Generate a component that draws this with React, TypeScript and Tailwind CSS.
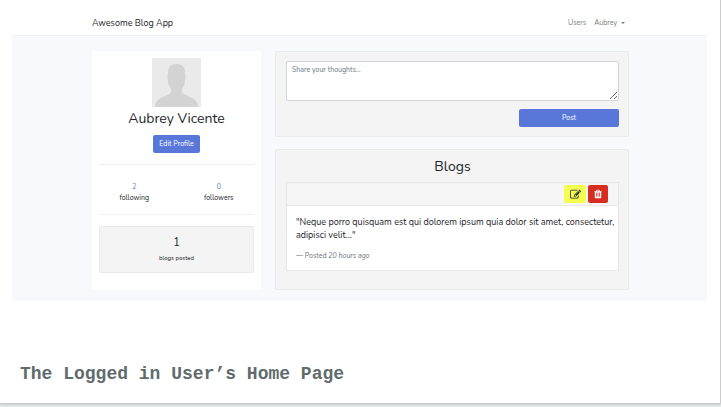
import type { ReactNode } from "react";

function Panel({ children, className }: { children: ReactNode; className: string }) {
  return (
    <section className={`rounded-[2px] border border-[#e9eaec] bg-[#f4f4f4] ${className}`}>
      {children}
    </section>
  );
}

function EditIcon() {
  return (
    <svg viewBox="0 0 1792 1792" className="size-[11px]" fill="currentColor" aria-hidden="true">
      <path d="M888 1184l116-116-152-152-116 116v56h96v96h56zm440-720q-16-16-33 1l-350 350q-17 17-1 33t33-1l350-350q17-17 1-33zm80 594v190q0 119-84.500 203.500t-203.500 84.500h-832q-119 0-203.500-84.500t-84.500-203.500v-832q0-119 84.500-203.500t203.500-84.500h832q63 0 117 25 15 7 18 23 3 17-9 29l-49 49q-14 14-32 8-23-6-45-6h-832q-66 0-113 47t-47 113v832q0 66 47 113t113 47h832q66 0 113-47t47-113v-126q0-13 9-22l64-64q15-15 35-7t20 29zm-96-738l288 288-672 672h-288v-288zm444 132l-92 92-288-288 92-92q28-28 68-28t68 28l152 152q28 28 28 68t-28 68z" />
    </svg>
  );
}

function TrashIcon() {
  return (
    <svg viewBox="0 0 1792 1792" className="size-[10px]" fill="currentColor" aria-hidden="true">
      <path d="M704 1376v-704q0-14-9-23t-23-9h-64q-14 0-23 9t-9 23v704q0 14 9 23t23 9h64q14 0 23-9t9-23zm256 0v-704q0-14-9-23t-23-9h-64q-14 0-23 9t-9 23v704q0 14 9 23t23 9h64q14 0 23-9t9-23zm256 0v-704q0-14-9-23t-23-9h-64q-14 0-23 9t-9 23v704q0 14 9 23t23 9h64q14 0 23-9t9-23zm-544-992h448l-48-117q-7-9-17-11h-317q-10 2-17 11zm928 32v64q0 14-9 23t-23 9h-96v948q0 83-47 143.500t-113 60.500h-832q-66 0-113-58.500t-47-141.500v-952h-96q-14 0-23-9t-9-23v-64q0-14 9-23t23-9h309l70-167q15-37 54-63t79-26h320q40 0 79 26t54 63l70 167h309q14 0 23 9t9 23z" />
    </svg>
  );
}

function Navbar() {
  return (
    <nav className="flex h-9 items-center justify-between border-b border-[#eff0f3] bg-white pt-[10px] pr-[78px] pl-20">
      <a href="#home" className="text-[9px] leading-4 text-[#212529]">
        Awesome Blog App
      </a>
      <div className="flex items-center gap-2 text-[7px] leading-4 text-[#7c7c7c]">
        <a href="#users">Users</a>
        <button type="button" className="flex items-center gap-1 pr-1">
          Aubrey
          <span className="border-x-2 border-t-2 border-x-transparent border-t-[#7c7c7c]" />
        </button>
      </div>
    </nav>
  );
}

function Avatar() {
  return (
    <svg viewBox="0 0 49 49" className="size-[49px]" role="img" aria-label="Aubrey Vicente">
      <rect width="49" height="49" fill="#eaeaea" />
      <path
        d="M3 49c0-5 3-8 8-10l6-3c2-1 2.500-2 2-5-2-3-3-5-3-9-.8-2-.8-4 0-6C15.500 10 18 6 24.500 6S33.500 10 33 16c.8 2 .8 4 0 6 0 4-1 6-3 9-.5 3 0 4 2 5l6 3c5 2 8 5 8 10z"
        fill="#d3d3d3"
      />
    </svg>
  );
}

function Stat({ value, label }: { value: number; label: string }) {
  return (
    <div className="flex flex-1 flex-col items-center text-[7px] leading-[11px] text-[#212529]">
      <a href={`#${label}`} className="text-[#5b79dc]">
        {value}
      </a>
      <span>{label}</span>
    </div>
  );
}

function Profile() {
  return (
    <aside className="flex flex-col items-center rounded-[2px] bg-white pt-[7px] text-[#212529]">
      <Avatar />
      <h1 className="mt-[2px] text-[14px] leading-5">Aubrey Vicente</h1>
      <button
        type="button"
        className="mt-[6px] h-[18px] rounded-[2px] bg-[#5977d9] px-[6px] text-[7px] leading-4 text-white"
      >
        Edit Profile
      </button>
      <div className="mt-[11px] w-full px-[7px]">
        <hr className="border-[#efefef]" />
      </div>
      <div className="flex w-full pt-4 pb-[11px]">
        <Stat value={2} label="following" />
        <Stat value={0} label="followers" />
      </div>
      <div className="w-full px-[7px]">
        <hr className="border-[#efefef]" />
        <Panel className="mt-[11px] flex h-[47px] flex-col items-center pt-2">
          <span className="text-[11px] leading-4">1</span>
          <span className="mt-[1px] text-[6px] leading-3">blogs posted</span>
        </Panel>
      </div>
    </aside>
  );
}

function Composer() {
  return (
    <Panel className="h-[86px] pt-[9px] pr-[9px] pl-[10px]">
      <form className="flex flex-col items-end">
        <textarea
          aria-label="Share your thoughts"
          placeholder="Share your thoughts..."
          className="block h-10 w-full rounded-[2px] border border-[#d3d7dc] bg-white px-[5px] py-[3px] text-[7px] leading-[10px] placeholder:text-[#6c757d]"
        />
        <button
          type="button"
          className="mt-2 h-[18px] w-[30%] rounded-[2px] bg-[#5977d9] text-[7px] leading-4 text-white"
        >
          Post
        </button>
      </form>
    </Panel>
  );
}

function Blogs() {
  return (
    <Panel className="pt-[7px] pr-[9px] pb-[18px] pl-[10px]">
      <h2 className="text-center text-[14px] leading-5 text-[#212529]">Blogs</h2>
      <article className="mt-[5px] border border-[#e6e7e8] bg-white">
        <header className="flex h-[23px] items-center justify-end gap-[2px] border-b border-[#e9e9e9] bg-[#f6f6f6] pr-[10px]">
          <button
            type="button"
            aria-label="Edit post"
            className="flex h-[18px] w-[22px] items-center justify-center rounded-[2px] bg-[#f4ff52] text-[#212529]"
          >
            <EditIcon />
          </button>
          <button
            type="button"
            aria-label="Delete post"
            className="flex h-[18px] w-5 items-center justify-center rounded-[2px] bg-[#d62d20] text-white"
          >
            <TrashIcon />
          </button>
        </header>
        <blockquote className="pt-[10px] pb-2 pl-[9px]">
          <p className="text-[9px] leading-[13px] text-[#212529]">
            "Neque porro quisquam est qui dolorem ipsum quia dolor sit amet, consectetur, adipisci
            velit..."
          </p>
          <footer className="mt-2 text-[7px] leading-3 text-[#6c757d]">
            — Posted <cite>20 hours ago</cite>
          </footer>
        </blockquote>
      </article>
    </Panel>
  );
}

export default function App() {
  return (
    <div className="min-h-screen bg-[#e8eaed]">
      <main className="border-r border-b border-[#cccccc] bg-white pb-[17px] shadow-sm">
        <div className="mr-[13px] ml-3 bg-[#f7f9fd] pb-[11px] font-[Nunito,Lato,'Open_Sans',sans-serif]">
          <Navbar />
          <div className="grid grid-cols-[169fr_354fr] gap-[14px] pt-[15px] pr-[78px] pl-20">
            <Profile />
            <div className="flex flex-col gap-3">
              <Composer />
              <Blogs />
            </div>
          </div>
        </div>
        <h3 className="mt-[61px] px-5 font-['Liberation_Mono',monospace] text-[18px] leading-6 font-bold text-[#5f6b6d]">
          The Logged in User’s Home Page
        </h3>
      </main>
    </div>
  );
}
